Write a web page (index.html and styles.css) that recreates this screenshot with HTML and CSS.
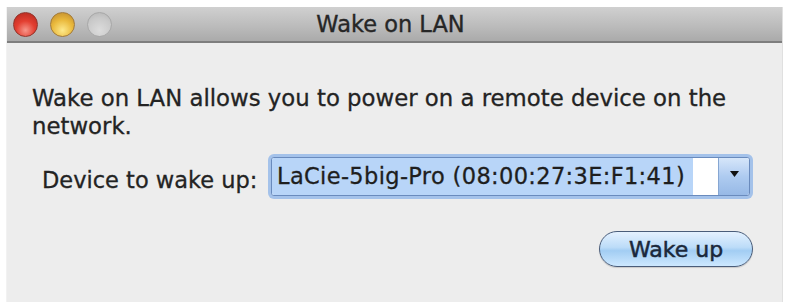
FILE: index.html
```html
<!DOCTYPE html>
<html>
<head>
<meta charset="utf-8">
<link rel="stylesheet" href="styles.css">
</head>
<body>
<div class="window">
  <div class="titlebar">
    <div class="lights">
      <span class="light red"></span>
      <span class="light yellow"></span>
      <span class="light gray"></span>
    </div>
    <div class="title">Wake on LAN</div>
  </div>
  <div class="content">
    <p class="intro">Wake on LAN allows you to power on a remote device on the network.</p>
    <div class="row">
      <span class="label">Device to wake up:</span>
      <div class="combo">
        <div class="field">
          <span class="sel">LaCie-5big-Pro (08:00:27:3E:F1:41)</span>
          <span class="blank"></span>
          <span class="arrow"><svg width="11" height="8" viewBox="0 0 11 8"><path d="M1 1 L10 1 L5.5 7 Z" fill="#111"/></svg></span>
        </div>
      </div>
    </div>
    <div class="actions">
      <button class="btn">Wake up</button>
    </div>
  </div>
</div>
</body>
</html>
```
FILE: styles.css
```css
html, body {
  margin: 0;
  padding: 0;
  background: #ffffff;
}
body {
  font-family: "DejaVu Sans", "Liberation Sans", sans-serif;
  color: #232323;
}
.window {
  margin: 7px 0 0 7px;
  width: 775px;
  height: 295px;
  background: #ededed;
  box-shadow: 1px 0 0 #e0e0e0, -1px 0 0 #f2f2f2;
  display: flex;
  flex-direction: column;
}
.titlebar {
  height: 34px;
  background: linear-gradient(#d0d0d0, #bababa 60%, #aaaaaa);
  border-bottom: 2px solid #7e7e7e;
  position: relative;
  display: flex;
  align-items: center;
}
.lights {
  display: flex;
  gap: 12px;
  padding-left: 6px;
}
.light {
  width: 25px;
  height: 25px;
  border-radius: 50%;
  box-sizing: border-box;
}
.red {
  background: radial-gradient(circle at 50% 75%, #f6968a 0%, #e33f31 45%, #b0261c 100%);
  border: 1px solid #93352c;
}
.yellow {
  background: radial-gradient(circle at 50% 75%, #fde98c 0%, #eab93c 50%, #bb862c 100%);
  border: 1px solid #a27a3a;
}
.gray {
  background: radial-gradient(circle at 50% 75%, #dcdcdc 0%, #c9c9c9 60%, #b3b3b3 100%);
  border: 1px solid #a8a8a8;
}
.title {
  position: absolute;
  left: 0;
  right: 0;
  top: 0;
  bottom: 0;
  display: flex;
  align-items: center;
  justify-content: center;
  padding-right: 8px;
  font-size: 22.5px;
  color: #262626;
  -webkit-text-stroke: 0.35px #262626;
}
.content {
  padding: 41px 29px 0 25px;
  display: flex;
  flex-direction: column;
}
.intro {
  margin: 0;
  font-size: 22.8px;
  line-height: 28px;
  width: 740px;
  -webkit-text-stroke: 0.3px #232323;
}
.row {
  margin-top: 14px;
  display: flex;
  align-items: center;
  padding-left: 10px;
}
.label {
  font-size: 22.5px;
  width: 226px;
  padding-top: 6px;
  -webkit-text-stroke: 0.3px #232323;
}
.combo {
  width: 485px;
  height: 45px;
  box-sizing: border-box;
  padding: 3px;
  border-radius: 6px;
  background: #a4c2ea;
}
.field {
  display: flex;
  height: 100%;
  box-sizing: border-box;
  border: 1px solid #6a8bbd;
  border-radius: 3px;
  background: #ffffff;
  overflow: hidden;
}
.sel {
  background: #b8d5f8;
  font-size: 22.5px;
  line-height: 37px;
  padding-left: 5px;
  width: 416px;
  white-space: nowrap;
  letter-spacing: 0.35px;
  color: #1e1e1e;
  -webkit-text-stroke: 0.3px #1e1e1e;
}
.blank {
  flex: 1;
}
.arrow {
  width: 30px;
  display: flex;
  align-items: center;
  justify-content: center;
  padding-bottom: 6px;
  background: linear-gradient(#d6e6fa, #aecbf0 50%, #97b9e6);
  border-left: 1px solid #86a6d2;
}
.actions {
  display: flex;
  justify-content: flex-end;
  margin-top: 32px;
}
.btn {
  width: 154px;
  height: 36px;
  border-radius: 18px;
  border: 1.5px solid #4a5d7a;
  background: linear-gradient(#e4f1ff 0%, #bcdcf8 45%, #a2cdf3 55%, #cde8ff 100%);
  font-family: "DejaVu Sans", "Liberation Sans", sans-serif;
  font-size: 22px;
  color: #1a283b;
  -webkit-text-stroke: 0.5px #1a283b;
  padding: 0;
  box-shadow: 0 1px 1px rgba(0,0,0,0.15);
}
```
